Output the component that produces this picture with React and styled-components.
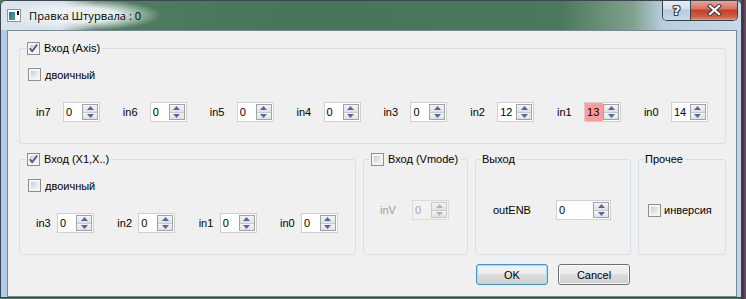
import React from 'react';
import styled, { createGlobalStyle } from 'styled-components';

const GlobalStyle = createGlobalStyle`
  html, body {
    margin: 0;
    padding: 0;
  }
  body {
    width: 746px;
    height: 299px;
    overflow: hidden;
    background: #2e3a33;
    font-family: "Liberation Sans", Arial, sans-serif;
    font-size: 11px;
    color: #000;
  }
`;

const Desktop = styled.div`
  width: 746px;
  height: 299px;
  overflow: hidden;
  background: linear-gradient(90deg, #4c7a5b 0, #4c7a5b 741px, #3b2f37 742px, #6a5070 746px);
`;

const Window = styled.div`
  box-sizing: border-box;
  width: 742px;
  height: 298px;
  border: 1px solid #3d4650;
  border-radius: 6px 6px 0 0;
  background: linear-gradient(90deg, #b3cce6 0, #c6daee 50%, #bcd3ea 100%);
  display: flex;
  flex-direction: column;
  overflow: hidden;
`;

const TitleBar = styled.div`
  height: 29px;
  flex: none;
  display: flex;
  align-items: center;
  background:
    radial-gradient(ellipse 80px 16px at 80px 14px, rgba(238, 243, 247, 0.95) 45%, rgba(238, 243, 247, 0) 100%),
    linear-gradient(90deg, #dae5ed 0, #d3dfe8 60px, #507e61 94px, #477559 300px, #4b795c 560px, #80a18d 632px, #b8cede 662px, #c6d9ea 740px);
`;

const AppIcon = styled.svg`
  flex: none;
  margin-left: 6px;
`;

const Caption = styled.span`
  margin-left: 8px;
  font-family: "Open Sans", "Liberation Sans", sans-serif;
  font-size: 11.2px;
  color: #000;
  line-height: 16px;
`;

const Controls = styled.div`
  margin: -1px 3px 0 auto;
  align-self: flex-start;
  height: 20px;
  display: flex;
  border: 1px solid #36424e;
  border-top: none;
  border-radius: 0 0 5px 5px;
  overflow: hidden;
`;

const HelpButton = styled.div`
  width: 27px;
  display: flex;
  align-items: center;
  justify-content: center;
  border-right: 1px solid #36424e;
  background: linear-gradient(#e6eef6 0, #d5e1ed 45%, #b8cadc 50%, #c9d9e8 100%);
  font-family: "DejaVu Sans", sans-serif;
  font-weight: bold;
  font-size: 13px;
  color: #fff;
  text-shadow: 1px 0 #3a4652, -1px 0 #3a4652, 0 1px #3a4652, 0 -1px #3a4652,
    1px 1px #3a4652, -1px -1px #3a4652, 1px -1px #3a4652, -1px 1px #3a4652;
`;

const CloseButton = styled.div`
  width: 46px;
  display: flex;
  align-items: center;
  justify-content: center;
  background: linear-gradient(#eaab9c 0, #d9735e 45%, #c43f29 50%, #cf6146 85%, #e5977a 100%);
`;

const Client = styled.div`
  flex: 1;
  margin: 0 4px 0 6px;
  border: 1px solid #7a8794;
  background: #f0f0f0;
  padding: 11px 10px 0 11px;
  display: flex;
  flex-direction: column;
`;

const Group = styled.fieldset`
  margin: 0;
  padding: 0;
  min-width: 0;
  border: 1px solid #d5dfe5;
  border-radius: 3px;
  display: flex;
  flex-direction: column;
  flex: ${p => (p.$grow ? '1' : 'none')};
  width: ${p => (p.$width ? `${p.$width}px` : 'auto')};
  box-sizing: border-box;
`;

const Legend = styled.legend`
  margin-left: ${p => p.$indent}px;
  padding: 0 2px 0 1px;
  height: 13px;
  display: flex;
  align-items: center;
  gap: 4px;
  line-height: 13px;
  white-space: nowrap;
`;

const GroupBody = styled.div`
  padding: 13px 17px 21px 8px;
`;

const CenterBody = styled.div`
  flex: 1;
  display: flex;
  align-items: center;
  padding-left: ${p => p.$left}px;
`;

const CheckRow = styled.div`
  height: 13px;
  display: flex;
  align-items: center;
  gap: ${p => p.$gap ?? 4}px;
`;

const Box = styled.span`
  position: relative;
  box-sizing: border-box;
  width: 13px;
  height: 13px;
  flex: none;
  border: 1px solid #8e8f8f;
  padding: 2px;
  background: linear-gradient(135deg, #c9cdd3, #f6f6f6) content-box, #f4f4f4;
`;

const Tick = styled.svg`
  position: absolute;
  left: 0;
  top: 0;
`;

const SpinRow = styled.div`
  margin: 21px 0 0 8px;
  display: flex;
  justify-content: space-between;
`;

const SpinItem = styled.div`
  display: flex;
  align-items: center;
`;

const Label = styled.span`
  width: ${p => p.$w}px;
  flex: none;
  color: ${p => (p.$disabled ? '#9c9c9c' : '#000')};
  white-space: nowrap;
`;

const SpinBox = styled.div`
  box-sizing: border-box;
  width: ${p => p.$w || 37}px;
  height: 20px;
  flex: none;
  display: flex;
  border: 1px solid ${p => (p.$disabled ? '#dadada' : '#d0d0d0')};
  background: ${p => (p.$disabled ? '#f2f2f2' : '#fff')};
`;

const SpinValue = styled.span`
  flex: 1;
  padding-left: 2px;
  line-height: 18px;
  background: ${p => (p.$hl ? '#ff9b99' : 'transparent')};
  color: ${p => (p.$disabled ? '#a3a3a3' : '#000')};
`;

const SpinButtons = styled.div`
  box-sizing: border-box;
  width: 16px;
  margin: 1px 1px 1px 0;
  display: flex;
  flex-direction: column;
  border: 1px solid ${p => (p.$disabled ? '#c9c9c9' : '#a3a3a3')};
`;

const SpinArrow = styled.div`
  flex: 1;
  display: flex;
  align-items: center;
  justify-content: center;
  background: linear-gradient(#f4f4f4, #e1e1e1);
  & + & {
    border-top: 1px solid ${p => (p.$disabled ? '#c9c9c9' : '#a3a3a3')};
  }
`;

const GroupRow = styled.div`
  margin-top: 9px;
  display: flex;
  gap: 7px;
`;

const ButtonRow = styled.div`
  margin-top: 9px;
  padding-right: 96px;
  display: flex;
  justify-content: flex-end;
  gap: 10px;
`;

const PushButton = styled.button`
  box-sizing: border-box;
  width: 72px;
  height: 21px;
  padding: 0;
  font: inherit;
  color: #000;
  border: 1px solid ${p => (p.$default ? '#3c96d6' : '#707070')};
  border-radius: 3px;
  background: linear-gradient(#f2f2f2 0%, #ebebeb 50%, #dddddd 50%, #cfcfcf 100%);
  box-shadow: inset 0 0 0 1px ${p => (p.$default ? '#a4def8' : '#fbfbfb')};
`;

const CheckBox = ({ checked }) => (
  <Box>
    {checked && (
      <Tick width="11" height="11" viewBox="0 0 11 11">
        <path d="M1.8 5.2 L4.2 8.2 L9.2 1.6" fill="none" stroke="#3a5183" strokeWidth="1.7" />
      </Tick>
    )}
  </Box>
);

const Spinner = ({ value, hl, disabled, w }) => (
  <SpinBox $w={w} $disabled={disabled}>
    <SpinValue $hl={hl} $disabled={disabled}>{value}</SpinValue>
    <SpinButtons $disabled={disabled}>
      <SpinArrow $disabled={disabled}>
        <svg width="7" height="4" viewBox="0 0 7 4">
          <polygon points="0,4 3.5,0 7,4" fill={disabled ? '#b4b4b4' : '#5069a6'} />
        </svg>
      </SpinArrow>
      <SpinArrow $disabled={disabled}>
        <svg width="7" height="4" viewBox="0 0 7 4">
          <polygon points="0,0 7,0 3.5,4" fill={disabled ? '#b4b4b4' : '#5069a6'} />
        </svg>
      </SpinArrow>
    </SpinButtons>
  </SpinBox>
);

const axisInputs = [
  { name: 'in7', value: 0 },
  { name: 'in6', value: 0 },
  { name: 'in5', value: 0 },
  { name: 'in4', value: 0 },
  { name: 'in3', value: 0 },
  { name: 'in2', value: 12 },
  { name: 'in1', value: 13, hl: true },
  { name: 'in0', value: 14 },
];

const xInputs = ['in3', 'in2', 'in1', 'in0'];

const App = () => (
  <Desktop>
    <GlobalStyle />
    <Window>
      <TitleBar>
        <AppIcon width="14" height="13" viewBox="0 0 14 13">
          <defs>
            <linearGradient id="ico" x1="0" y1="0" x2="1" y2="1">
              <stop offset="0" stopColor="#2f6fb4" />
              <stop offset="1" stopColor="#4fa77a" />
            </linearGradient>
          </defs>
          <rect x="0.5" y="0.5" width="13" height="12" fill="#fff" stroke="#8a97a3" />
          <rect x="2" y="3" width="6" height="8" fill="url(#ico)" />
          <rect x="10" y="2" width="2" height="4" fill="#111" />
        </AppIcon>
        <Caption>Правка Штурвала : 0</Caption>
        <Controls>
          <HelpButton>?</HelpButton>
          <CloseButton>
            <svg width="15" height="12" viewBox="0 0 15 12">
              <path d="M3 2 L12 10 M12 2 L3 10" stroke="#3a3a44" strokeWidth="4.2" strokeLinecap="square" />
              <path d="M3 2 L12 10 M12 2 L3 10" stroke="#fff" strokeWidth="2.2" strokeLinecap="square" />
            </svg>
          </CloseButton>
        </Controls>
      </TitleBar>
      <Client>
        <Group>
          <Legend $indent={6}>
            <CheckBox checked />
            Вход (Axis)
          </Legend>
          <GroupBody>
            <CheckRow>
              <CheckBox />
              двоичный
            </CheckRow>
            <SpinRow>
              {axisInputs.map(item => (
                <SpinItem key={item.name}>
                  <Label $w={27}>{item.name}</Label>
                  <Spinner value={item.value} hl={item.hl} />
                </SpinItem>
              ))}
            </SpinRow>
          </GroupBody>
        </Group>
        <GroupRow>
          <Group $width={337}>
            <Legend $indent={6}>
              <CheckBox checked />
              Вход (X1,X..)
            </Legend>
            <GroupBody>
              <CheckRow>
                <CheckBox />
                двоичный
              </CheckRow>
              <SpinRow>
                {xInputs.map(name => (
                  <SpinItem key={name}>
                    <Label $w={21}>{name}</Label>
                    <Spinner value={0} />
                  </SpinItem>
                ))}
              </SpinRow>
            </GroupBody>
          </Group>
          <Group $width={105}>
            <Legend $indent={6}>
              <CheckBox />
              Вход (Vmode)
            </Legend>
            <CenterBody $left={16}>
              <Label $w={32} $disabled>inV</Label>
              <Spinner value={0} disabled />
            </CenterBody>
          </Group>
          <Group $width={156}>
            <Legend $indent={5}>Выход</Legend>
            <CenterBody $left={17}>
              <Label $w={63}>outENB</Label>
              <Spinner value={0} w={55} />
            </CenterBody>
          </Group>
          <Group $grow>
            <Legend $indent={5}>Прочее</Legend>
            <CenterBody $left={9}>
              <CheckRow $gap={3}>
                <CheckBox />
                инверсия
              </CheckRow>
            </CenterBody>
          </Group>
        </GroupRow>
        <ButtonRow>
          <PushButton $default>OK</PushButton>
          <PushButton>Cancel</PushButton>
        </ButtonRow>
      </Client>
    </Window>
  </Desktop>
);

export default App;
